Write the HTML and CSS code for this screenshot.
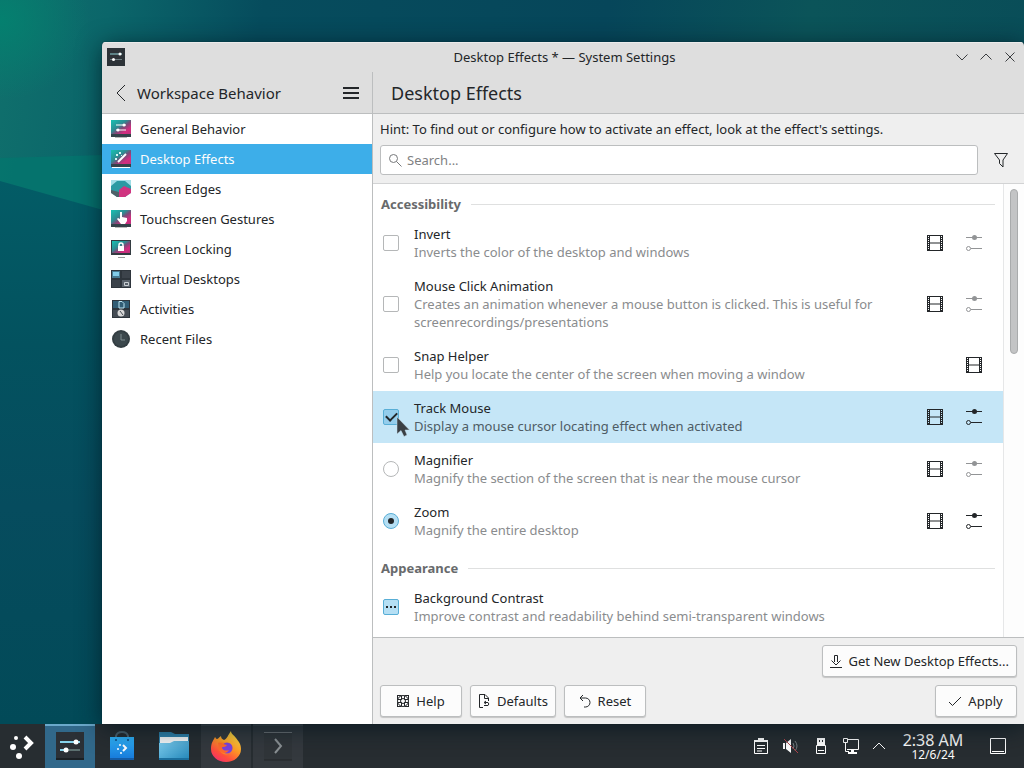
FILE: index.html
```html
<!DOCTYPE html>
<html lang="en">
<head>
<meta charset="utf-8">
<title>Desktop Effects — System Settings</title>
<link rel="stylesheet" href="styles.css">
</head>
<body>
<svg class="defs" width="0" height="0" aria-hidden="true">
  <defs>
    <linearGradient id="wall" x1="0" y1="0" x2="1" y2="1"><stop offset="0" stop-color="#16c2b2"/><stop offset="0.4" stop-color="#2d8c92"/><stop offset="0.55" stop-color="#7d4a78"/><stop offset="0.75" stop-color="#d42c80"/><stop offset="1" stop-color="#b8357c"/></linearGradient>
    <linearGradient id="blue" x1="0" y1="0" x2="0" y2="1"><stop offset="0" stop-color="#2fb3fa"/><stop offset="1" stop-color="#1677d8"/></linearGradient>
    <linearGradient id="folder" x1="0" y1="0" x2="1" y2="1"><stop offset="0" stop-color="#7fd0f2"/><stop offset="1" stop-color="#2386b8"/></linearGradient>
    <linearGradient id="fox" x1="0.8" y1="0" x2="0.2" y2="1"><stop offset="0" stop-color="#ffe845"/><stop offset="0.45" stop-color="#ff9a26"/><stop offset="0.75" stop-color="#ff4f3c"/><stop offset="1" stop-color="#f22d6e"/></linearGradient>
    <linearGradient id="deep" x1="0" y1="0" x2="0" y2="1"><stop offset="0" stop-color="#035c66"/><stop offset="0.3" stop-color="#03525f"/><stop offset="0.6" stop-color="#064c5e"/><stop offset="1" stop-color="#024a58"/></linearGradient>
    <symbol id="film" viewBox="0 0 16 16">
      <path d="M0 0h16v16H0zM3 1v6.500h10V1zM3 8.500V15h10V8.500z" fill="currentColor" fill-rule="evenodd"/>
      <path d="M1.500 1v14M14.500 1v14" stroke="var(--hole)" stroke-width="1" stroke-dasharray="1 1"/>
    </symbol>
    <symbol id="tune" viewBox="0 0 16 16">
      <path d="M0 2.500h16M5 13.500h11" stroke="currentColor"/>
      <circle cx="8.500" cy="2.500" r="2.500" fill="currentColor"/>
      <circle cx="2.500" cy="13.500" r="2" fill="none" stroke="currentColor"/>
    </symbol>
  </defs>
</svg>

<main class="desktop">
  <svg class="wallpaper" viewBox="0 0 1024 724" preserveAspectRatio="none" aria-hidden="true">
    <path d="M0 158 140 154V230L0 182z" fill="#04756e" opacity="0.8"/>
    <path d="M0 181 160 226V724H0z" fill="url(#deep)"/>
  </svg>
  <section class="window">
    <header class="titlebar">
      <svg class="app-icon" viewBox="0 0 18 18"><path d="M0 0h18v18H0z" fill="#2d3338"/><path d="M3 6h12" stroke="#8fd3d6"/><path d="M3 11.500h12" stroke="#6d7d80"/><circle cx="13" cy="6" r="1.500" fill="#fff"/><circle cx="6.500" cy="11.500" r="1.500" fill="#fff"/></svg>
      <h1 class="window-title">Desktop Effects * — System Settings</h1>
      <div class="window-buttons">
        <button class="flat" aria-label="Minimize"><svg viewBox="0 0 16 16"><path d="M2.500 5.500 8 11l5.500-5.500"/></svg></button>
        <button class="flat" aria-label="Maximize"><svg viewBox="0 0 16 16"><path d="M2.500 10.500 8 5l5.500 5.500"/></svg></button>
        <button class="flat" aria-label="Close"><svg viewBox="0 0 16 16"><path d="M3.500 3.500l9 9M12.500 3.500l-9 9"/></svg></button>
      </div>
    </header>

    <div class="panes">
      <aside class="sidebar">
        <div class="side-head">
          <button class="flat back" aria-label="Back"><svg viewBox="0 0 16 20"><path d="M13 2 5 10l8 8"/></svg></button>
          <h2 class="side-title">Workspace Behavior</h2>
          <button class="flat menu" aria-label="Menu"><svg viewBox="0 0 16 16"><path d="M0 3h16M0 8h16M0 13h16" stroke-width="2"/></svg></button>
        </div>
        <nav class="nav">
          <a href="#general"><svg viewBox="0 0 20 18"><path d="M0 0h20v15H0z" fill="url(#wall)"/><path d="M0 14h20v3H0z" fill="#34424a"/><path d="M4 17.500h12" stroke="#bbb"/><path d="M5 5h10M5 10h10" stroke="#fff"/><circle cx="13" cy="5" r="1.500" fill="#fff"/><circle cx="7" cy="10" r="1.500" fill="#fff"/></svg>General Behavior</a>
          <a href="#effects" class="current"><svg viewBox="0 0 20 18"><path d="M0 0h20v15H0z" fill="url(#wall)"/><path d="M0 14h20v3H0z" fill="#34424a"/><path d="M1 17.500h18" stroke="#fff"/><path d="M7 12l8-8" stroke="#fff" stroke-width="2"/><path d="M5 4h2v2H5zM8 2h2v2H8zM4 8h2v2H4zM10 5h1v1h-1z" fill="#d5f3f1"/></svg>Desktop Effects</a>
          <a href="#edges"><svg viewBox="0 0 20 18"><path d="M0 0h20v13l-6 4H6l-6-4z" fill="#9fdde6"/><path d="M0 6l6-5h8l6 5v6l-6 5H6l-6-5z" fill="#2b9aa3"/><path d="M8 10l5-4 7 3v4l-6 4H8z" fill="#d03480"/><path d="M0 10l8 2v5H6l-6-4z" fill="#4f6068"/></svg>Screen Edges</a>
          <a href="#touch"><svg viewBox="0 0 20 18"><path d="M0 0h20v15H0z" fill="url(#wall)"/><path d="M0 14h20v3H0z" fill="#34424a"/><path d="M4 17.500h12" stroke="#bbb"/><path d="M9 2h2v5l5 1v3l-2 3h-4L6 9l1-1 2 1z" fill="#fff"/></svg>Touchscreen Gestures</a>
          <a href="#locking"><svg viewBox="0 0 20 18"><path d="M0 0h20v15H0z" fill="#333b41"/><path d="M1 1h18v12H1z" fill="url(#wall)"/><path d="M7 17.500h7" stroke="#999"/><path d="M8 7V5a2 2 0 0 1 4 0v2" fill="none" stroke="#fff" stroke-width="1.500"/><path d="M7 6h6v5H7z" fill="#fff"/></svg>Screen Locking</a>
          <a href="#virtual"><svg viewBox="0 0 20 18"><path d="M0 0h20v18H0z" fill="#2e353c"/><path d="M1 1h8v7H1z" fill="#467a92"/><path d="M11 1h8v7h-8zM1 10h8v7H1z" fill="#3c434b"/><path d="M11 10h8v7h-8z" fill="#59626b"/><path d="M2 2h6v4H2z" fill="#81cbe8"/><path d="M13.500 12.500h4v3h-4z" fill="none" stroke="#c8ced2"/></svg>Virtual Desktops</a>
          <a href="#activities"><svg viewBox="0 0 20 18"><path d="M1 0h18v18H1z" fill="#2e353c"/><path d="M2 1h16v7H2z" fill="#315d75"/><path d="M2 10h16v7H2z" fill="#454c54"/><path d="M8 1.500h3l2 2V8H8z" fill="#315d75" stroke="#bce4f2"/><circle cx="10" cy="13" r="3.500" fill="#d9d9d9"/><path d="M9 11l3 4" stroke="#454c54"/></svg>Activities</a>
          <a href="#recent"><svg viewBox="0 0 20 18"><circle cx="10" cy="9" r="9" fill="#333d42"/><circle cx="10" cy="9" r="7" fill="#3c484d"/><path d="M10 4v6h4" fill="none" stroke="#7e8c90"/></svg>Recent Files</a>
        </nav>
      </aside>

      <section class="content">
        <h2 class="page-title">Desktop Effects</h2>
        <div class="tools">
          <p class="hint">Hint: To find out or configure how to activate an effect, look at the effect's settings.</p>
          <div class="search-row">
            <label class="search"><svg viewBox="0 0 14 14"><circle cx="5.500" cy="5.500" r="4"/><path d="M8.500 8.500l5 5"/></svg><input type="text" placeholder="Search..." aria-label="Search"></label>
            <button class="flat filter" aria-label="Filter"><svg viewBox="0 0 16 16"><path d="M1.500 1.500h13L10 8v7l-3.500-3.500V8z"/></svg></button>
          </div>
        </div>

        <div class="scroll">
          <div class="effects">
            <section class="group">
              <h3>Accessibility</h3>
              <div class="effect">
                <input type="checkbox" id="invert">
                <label for="invert">Invert<small>Inverts the color of the desktop and windows</small></label>
                <button class="flat act" aria-label="Preview Invert"><svg><use href="#film"/></svg></button>
                <button class="flat act" disabled aria-label="Configure Invert"><svg><use href="#tune"/></svg></button>
              </div>
              <div class="effect">
                <input type="checkbox" id="click">
                <label for="click">Mouse Click Animation<small>Creates an animation whenever a mouse button is clicked. This is useful for screenrecordings/presentations</small></label>
                <button class="flat act" aria-label="Preview Mouse Click Animation"><svg><use href="#film"/></svg></button>
                <button class="flat act" disabled aria-label="Configure Mouse Click Animation"><svg><use href="#tune"/></svg></button>
              </div>
              <div class="effect">
                <input type="checkbox" id="snap">
                <label for="snap">Snap Helper<small>Help you locate the center of the screen when moving a window</small></label>
                <button class="flat act" aria-label="Preview Snap Helper"><svg><use href="#film"/></svg></button>
              </div>
              <div class="effect selected">
                <input type="checkbox" id="track" checked>
                <label for="track">Track Mouse<small>Display a mouse cursor locating effect when activated</small></label>
                <button class="flat act" aria-label="Preview Track Mouse"><svg><use href="#film"/></svg></button>
                <button class="flat act" aria-label="Configure Track Mouse"><svg><use href="#tune"/></svg></button>
                <svg class="cursor" viewBox="0 0 14 22"><path d="M1 1v17l4-3.500 3 6 3-1.500-2-5h4.500z" fill="#3a3f44" stroke="#c5dde9" stroke-width="0.500"/></svg>
              </div>
              <div class="effect">
                <input type="radio" name="zoom" id="magnifier">
                <label for="magnifier">Magnifier<small>Magnify the section of the screen that is near the mouse cursor</small></label>
                <button class="flat act" aria-label="Preview Magnifier"><svg><use href="#film"/></svg></button>
                <button class="flat act" disabled aria-label="Configure Magnifier"><svg><use href="#tune"/></svg></button>
              </div>
              <div class="effect">
                <input type="radio" name="zoom" id="zoom" checked>
                <label for="zoom">Zoom<small>Magnify the entire desktop</small></label>
                <button class="flat act" aria-label="Preview Zoom"><svg><use href="#film"/></svg></button>
                <button class="flat act" aria-label="Configure Zoom"><svg><use href="#tune"/></svg></button>
              </div>
            </section>
            <section class="group">
              <h3>Appearance</h3>
              <div class="effect">
                <input type="checkbox" id="contrast" class="mixed">
                <label for="contrast">Background Contrast<small>Improve contrast and readability behind semi-transparent windows</small></label>
              </div>
            </section>
          </div>
          <div class="scrollbar"><div class="thumb"></div></div>
        </div>

        <footer class="footer">
          <div class="actions end">
            <button class="btn"><svg viewBox="0 0 16 16"><path d="M6.500 9V2.500h3V9M3.500 7.500 8 12l4.500-4.500M2 14.500h12"/></svg>Get New Desktop Effects...</button>
          </div>
          <div class="actions">
            <button class="btn"><svg viewBox="0 0 16 16"><circle cx="8" cy="8" r="5.500"/><circle cx="8" cy="8" r="2.500"/><path d="M6.500 2.500v4M9.500 2.500v4M6.500 9.500v4M9.500 9.500v4M2.500 6.500h4M2.500 9.500h4M9.500 6.500h4M9.500 9.500h4M2.500 2.500v4M13.500 2.500v4M2.500 13.500v-4M13.500 13.500v-4M2 2.500h4M10 2.500h4M2 13.500h4M10 13.500h4"/></svg>Help</button>
            <button class="btn"><svg viewBox="0 0 16 16"><path d="M7 14.500H3.500v-13H9L12.500 5v3M8.500 2v3.500H12M8 12.500h4a2 2 0 0 0 0-3H8.500M10 8l-2 1.500L10 11"/></svg>Defaults</button>
            <button class="btn"><svg viewBox="0 0 16 16"><path d="M6 2 3 5l3 3M3 5h5.500a4.500 4.500 0 0 1 0 9H7"/></svg>Reset</button>
            <button class="btn apply"><svg viewBox="0 0 16 16"><path d="M2 9l3.500 3.500L14 4"/></svg>Apply</button>
          </div>
        </footer>
      </section>
    </div>
  </section>
</main>

<footer class="taskbar">
  <button class="flat launcher" aria-label="Application Launcher"><svg viewBox="0 0 28 28"><circle cx="7" cy="6" r="2" fill="#fff"/><circle cx="4" cy="15" r="3" fill="#fff"/><circle cx="10" cy="24" r="3" fill="#fff"/><path d="M16 5l6 6-6 6" stroke="#fff" stroke-width="4" fill="none"/></svg></button>
  <div class="tasks">
    <button class="flat task active" aria-label="System Settings"><svg viewBox="0 0 32 32"><path d="M2 1h28v28H2z" fill="#2b3036"/><path d="M2 28h28" stroke="#1b2024" stroke-width="2"/><path d="M6 11h20" stroke="#86d3ec" stroke-width="2"/><path d="M6 19h20" stroke="#5c7070" stroke-width="2"/><path d="M6 19h6" stroke="#86d3ec" stroke-width="2"/><circle cx="22" cy="11" r="2.500" fill="#fff"/><circle cx="12" cy="19" r="2.500" fill="#fff"/></svg></button>
    <button class="flat task" aria-label="Discover"><svg viewBox="0 0 32 32"><path d="M10 7V5q1-4 6-4t6 4v2" fill="none" stroke="#4c6370" stroke-width="2"/><path d="M4 6h24v23H4z" fill="url(#blue)"/><path d="M4 28h24" stroke="#145ca6" stroke-width="2"/><circle cx="10" cy="9" r="1" fill="#0f4c83"/><circle cx="22" cy="9" r="1" fill="#0f4c83"/><circle cx="14" cy="14" r="1" fill="#fff"/><circle cx="12" cy="18" r="1" fill="#fff"/><circle cx="15" cy="22" r="1" fill="#fff"/><path d="M17 14l3 3-3 3" fill="none" stroke="#fff" stroke-width="2"/></svg></button>
    <button class="flat task" aria-label="Dolphin"><svg viewBox="0 0 32 32"><path d="M1 1h12l4 2h14v12H1z" fill="#2f83ad"/><path d="M2 6h28v8H2z" fill="#f6f9fa"/><path d="M1 12h11l4-2h15v19H1z" fill="url(#folder)"/><path d="M1 28h30" stroke="#1b6f9e" stroke-width="2"/></svg></button>
    <button class="flat task open" aria-label="Firefox"><svg viewBox="0 0 32 32"><path d="M21 0c0 3 3 4 5 7s5 5 5 11a15 13 0 0 1-30 0C1 12 3 10 5 6c1 1 1 2 2 2 1 0 2-2 4-3 0 2 1 3 3 4 3-1 4-5 7-9z" fill="url(#fox)"/><path d="M8 11c4-1 7 1 9 1 5 1 7 4 5 8s-9 5-12 0c-2-4 1-5-2-9z" fill="#ff8a21"/><circle cx="17" cy="17" r="5.500" fill="#7b42df"/><path d="M8 12c4-1 5 2 9 2-2 3-5 1-5 3 1 3 5 3 7 2-2 4-8 4-10 0-1-2 0-4-1-7z" fill="#ff6a2c"/></svg></button>
    <button class="flat task open" aria-label="Konsole"><svg viewBox="0 0 32 32"><path d="M2 1h28v28H2z" fill="#303539"/><path d="M2 1.500h28" stroke="#6c7174"/><path d="M2 29h28" stroke="#222629"/><path d="M13 8l6 7-6 7" fill="none" stroke="#8b9194" stroke-width="2"/></svg></button>
  </div>
  <div class="tray">
    <button class="flat" aria-label="Clipboard"><svg viewBox="0 0 16 16"><path d="M1.500 3v12.500h13V3" fill="none" stroke="#fff"/><path d="M1 2h4V0h6v2h4v2H1z" fill="#fff"/><path d="M4 7.500h8M4 10.500h8M4 13h5" stroke="#fff"/></svg></button>
    <button class="flat" aria-label="Volume muted"><svg viewBox="0 0 16 16"><path d="M0 5h2v6H0zM3 5l5-4v14l-5-4z" fill="#fff"/><path d="M10 5q2 3 0 6M12 3q4 5 0 10" fill="none" stroke="#788084"/><path d="M1 1l14 14" stroke="#b0444d"/></svg></button>
    <button class="flat" aria-label="Devices"><svg viewBox="0 0 16 16"><path d="M4 0h8v7H4zM6 2v2h1V2zM9 2v2h1V2z" fill="#fff" fill-rule="evenodd"/><path d="M3.500 7.500h9v8h-9zM5 12.500h6" fill="none" stroke="#fff"/></svg></button>
    <button class="flat" aria-label="Network"><svg viewBox="0 0 16 16"><path d="M5 1.500h10.500v10H4M.5.5h4v4h-4zM2.500 5v8.500H6" fill="none" stroke="#fff"/><path d="M8 11h3v3h3v2H5v-2h3z" fill="#fff"/></svg></button>
    <button class="flat expand" aria-label="Show hidden icons"><svg viewBox="0 0 16 16"><path d="M2 11l6-6 6 6" fill="none" stroke="#fff"/></svg></button>
    <div class="clock"><time>2:38 AM</time><span>12/6/24</span></div>
    <button class="flat peek" aria-label="Show desktop"><svg viewBox="0 0 16 16"><path d="M.5.5h15v15H.5zM2 13.500h12" fill="none" stroke="#fff"/></svg></button>
  </div>
</footer>
</body>
</html>
```

FILE: styles.css
```css
* { box-sizing: border-box; }

:root {
  --text: #232629;
  --muted: #8a8c8e;
  --line: #bcbebf;
  --chrome: #dedede;
  --blue: #3daee9;
  --hole: #fff;
}

body {
  margin: 0;
  height: 100vh;
  display: flex;
  flex-direction: column;
  overflow: hidden;
  font: 13px/18px "Noto Sans", sans-serif;
  color: var(--text);
}

h1, h2, h3, p { margin: 0; font-weight: 400; }
svg { display: block; flex: none; }
.defs { position: absolute; }

.flat {
  display: flex;
  align-items: center;
  justify-content: center;
  padding: 0;
  border: 0;
  background: none;
  color: inherit;
}

.desktop {
  position: relative;
  flex: 1;
  min-height: 0;
  display: flex;
  padding: 42px 0 0 102px;
  background:
    radial-gradient(ellipse 90px 80px at 0 20px, #04806f, transparent),
    linear-gradient(100deg, #10706c 0, #0b666a 110px, #064c5d 260px, #06465a 600px, #0b5459 800px, #084a58 100%);
}
.wallpaper { position: absolute; inset: 0; width: 100%; height: 100%; }

.window {
  position: relative;
  flex: 1;
  min-width: 0;
  display: flex;
  flex-direction: column;
  border-radius: 4px 4px 0 0;
  background: var(--chrome);
  box-shadow: 0 4px 24px #00141eb3, 0 0 1px #001a22;
  overflow: hidden;
}

.titlebar {
  display: grid;
  grid-template-columns: 1fr auto 1fr;
  align-items: center;
  height: 30px;
  padding: 0 2px 0 5px;
  box-shadow: inset 0 1px #ebebeb;
}
.app-icon { width: 18px; height: 18px; }
.window-title { font-size: 13px; }
.window-buttons { display: flex; justify-content: flex-end; }
.window-buttons button { width: 24px; height: 24px; }
.window-buttons svg { width: 16px; height: 16px; fill: none; stroke: #3b3e41; }

.panes { flex: 1; min-height: 0; display: flex; }

.sidebar {
  width: 271px;
  flex: none;
  display: flex;
  flex-direction: column;
  background: #fff;
  border-right: 1px solid var(--line);
}
.side-head {
  display: flex;
  align-items: center;
  height: 42px;
  padding: 0 13px 0 10px;
  background: var(--chrome);
  border-bottom: 1px solid var(--line);
}
.back svg { width: 16px; height: 20px; fill: none; stroke: var(--text); }
.side-title { flex: 1; padding-left: 9px; font-size: 15px; line-height: 20px; }
.menu svg { width: 16px; height: 16px; stroke: var(--text); }

.nav a {
  display: flex;
  align-items: center;
  gap: 9px;
  height: 30px;
  padding-left: 9px;
  color: var(--text);
  text-decoration: none;
}
.nav svg { width: 20px; height: 18px; }
.nav .current { background: var(--blue); color: #fcfcfc; }

.content {
  flex: 1;
  min-width: 0;
  display: flex;
  flex-direction: column;
  background: #efefef;
}
.page-title {
  height: 42px;
  padding-left: 18px;
  background: var(--chrome);
  border-bottom: 1px solid var(--line);
  font-size: 18px;
  line-height: 42px;
}
.tools { padding: 6px 7px 8px; border-bottom: 1px solid #d2d3d4; }
.hint { padding-bottom: 7px; }
.search-row { display: flex; align-items: center; }
.search {
  flex: 1;
  display: flex;
  align-items: center;
  gap: 5px;
  height: 30px;
  padding: 0 7px;
  border: 1px solid var(--line);
  border-radius: 3px;
  background: #fff;
}
.search svg { width: 14px; height: 14px; fill: none; stroke: #77797b; }
.search input {
  flex: 1;
  min-width: 0;
  padding: 0;
  border: 0;
  outline: 0;
  background: none;
  font: inherit;
}
.search input::placeholder { color: #7f8183; opacity: 1; }
.filter { width: 32px; height: 30px; margin-left: 7px; }
.filter svg { width: 16px; height: 16px; fill: none; stroke: var(--text); }

.scroll { flex: 1; min-height: 0; display: flex; background: #fff; overflow: hidden; }
.effects { flex: 1; min-width: 0; }
.group + .group { margin-top: 1px; }
.group h3 {
  display: flex;
  align-items: center;
  gap: 10px;
  padding: 11px 8px 4px;
  color: #686a6c;
  font-size: 13px;
  font-weight: 700;
  line-height: 18px;
}
.group h3::after { content: ""; flex: 1; height: 1px; background: #dfe0e0; }

.effect {
  position: relative;
  display: flex;
  align-items: center;
  min-height: 52px;
  padding: 8px 10px;
}
.effect label { flex: 1; padding: 0 32px 0 15px; }
.effect small { display: block; font-size: 13px; color: var(--muted); }
.selected { background: #c5e6f7; --hole: #c5e6f7; }
.selected small { color: #4e5c65; }

.effect input {
  appearance: none;
  display: grid;
  place-items: center;
  flex: none;
  width: 16px;
  height: 16px;
  margin: 0;
  border: 1px solid #b5b7b8;
  border-radius: 2px;
  background: #fff;
}
.effect input[type="radio"] { border-radius: 50%; }
.effect input:checked, .effect .mixed { border-color: #58aed6; background: #b5dff4; }
.effect input[type="checkbox"]:checked { background: #94cdec; }
.effect input[type="checkbox"]:checked::before {
  content: "";
  width: 9px;
  height: 5px;
  margin-bottom: 3px;
  border: solid var(--text);
  border-width: 0 0 2px 2px;
  transform: rotate(-45deg);
}
.effect input[type="radio"]:checked::before {
  content: "";
  width: 6px;
  height: 6px;
  border-radius: 50%;
  background: var(--text);
}
.effect .mixed::before {
  content: "";
  width: 10px;
  height: 2px;
  background: repeating-linear-gradient(90deg, var(--text) 0 2px, transparent 2px 4px);
}

.act { width: 39px; height: 32px; }
.act svg { width: 16px; height: 16px; }
.act:disabled { color: #929496; }

.cursor { position: absolute; left: 23px; top: 25px; width: 14px; height: 22px; }

.scrollbar { width: 21px; padding: 5px 6px; border-left: 1px solid #e6e7e8; background: #fdfdfd; }
.thumb { width: 8px; height: 165px; border: 1px solid #a9abac; border-radius: 4px; background: #c3c4c5; }

.footer {
  display: flex;
  flex-direction: column;
  gap: 8px;
  padding: 7px;
  border-top: 1px solid var(--line);
}
.actions { display: flex; gap: 8px; }
.end { justify-content: flex-end; }
.btn {
  display: flex;
  align-items: center;
  justify-content: center;
  gap: 5px;
  min-width: 82px;
  height: 32px;
  padding: 0 7px 0 5px;
  border: 1px solid var(--line);
  border-radius: 3px;
  background: #fcfcfc;
  box-shadow: 0 1px 1px #0000002e;
  color: var(--text);
  font: inherit;
}
.btn svg { width: 16px; height: 16px; fill: none; stroke: var(--text); }
.apply { margin-left: auto; }

.taskbar { display: flex; height: 44px; background: #272d31; color: #fcfcfc; }
.launcher { width: 45px; }
.launcher svg { width: 28px; height: 28px; }
.tasks { flex: 1; display: flex; gap: 2px; }
.task { width: 50px; border-top: 2px solid transparent; }
.task svg { width: 32px; height: 32px; }
.active { background: #31688a; border-top-color: #6ba9cb; }
.open { background: #34393e; border-top-color: #42484d; }

.tray { display: flex; }
.tray button { width: 30px; }
.tray svg { width: 16px; height: 16px; }
.tray .expand { width: 26px; }
.tray .peek { width: 52px; }
.clock {
  width: 80px;
  display: flex;
  flex-direction: column;
  align-items: center;
  justify-content: center;
  padding: 2px 0 0 2px;
}
.clock time { font-size: 16px; line-height: 16px; }
.clock span { font-size: 12px; line-height: 14px; }
```
